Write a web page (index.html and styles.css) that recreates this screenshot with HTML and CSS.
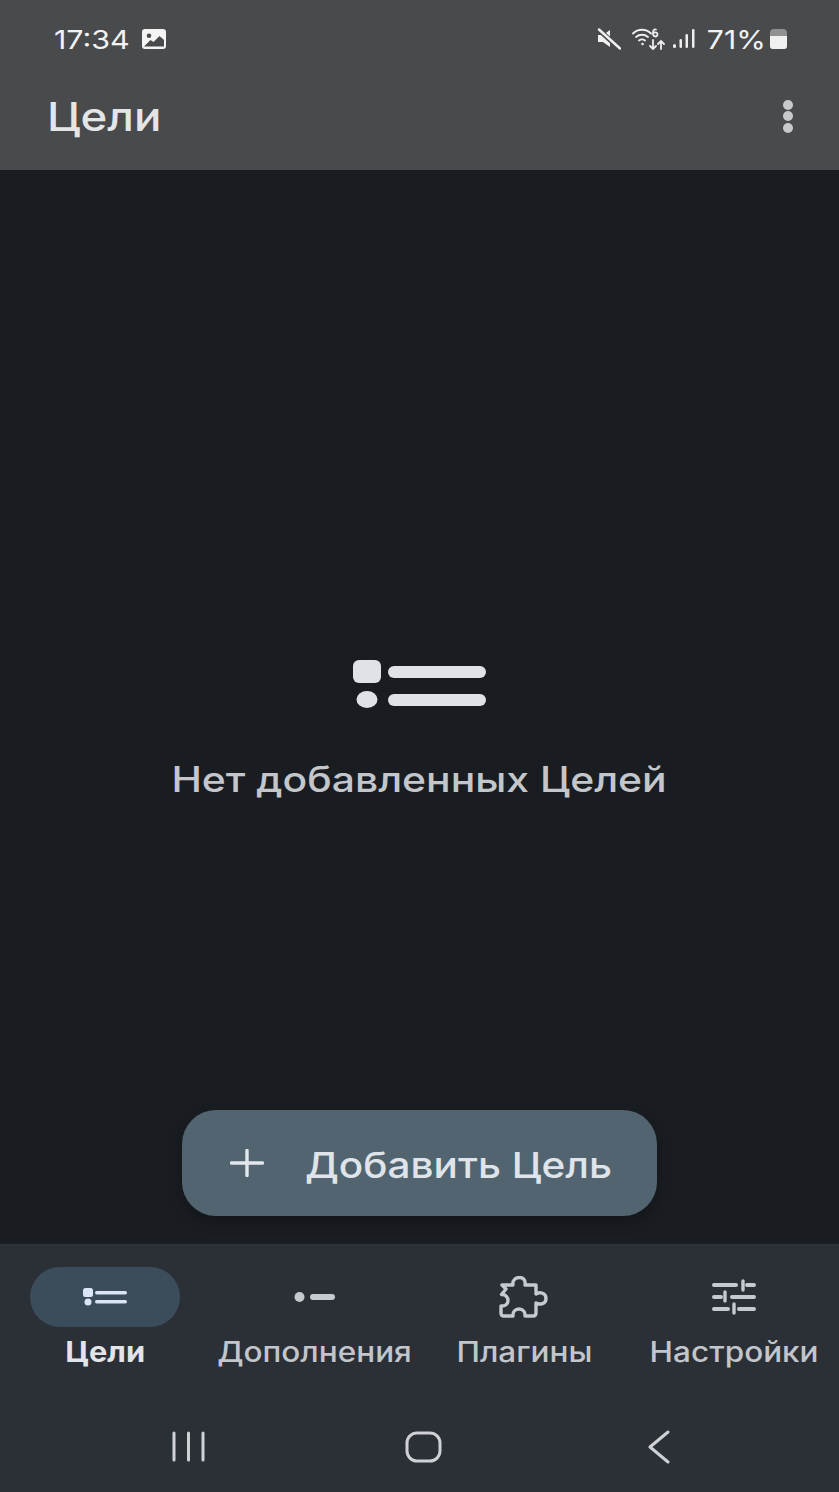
FILE: index.html
```html
<!DOCTYPE html>
<html>
<head>
	<meta charset="utf-8">
	<meta name="viewport" content="width=device-width, initial-scale=1">
	<title>Цели</title>
	<link rel="stylesheet" href="styles.css">
</head>
<body>
	<div class="app">
		<header class="appbar">
			<div class="status">
				<span class="time">17:34</span>
				<svg class="st-pic" width="24" height="20" viewBox="0 0 24 20">
					<path fill="#f4f4f5" fill-rule="evenodd" d="M3 0h18a3 3 0 0 1 3 3v14a3 3 0 0 1-3 3H3a3 3 0 0 1-3-3V3a3 3 0 0 1 3-3zM7 4.500a2.300 2.300 0 1 0 0 4.600a2.300 2.300 0 0 0 0-4.600zM2 17.500h20v-6.500l-4.500-4-6 6-3-2z"/>
				</svg>
				<div class="status-right">
					<svg width="24" height="22" viewBox="0 0 24 22">
						<path fill="#f2f2f3" d="M1 7h5l7-5v17l-7-5H1z"/>
						<path stroke="#484a4c" stroke-width="5" d="M1 1l22 20"/>
						<path stroke="#f2f2f3" stroke-width="2.400" stroke-linecap="round" d="M2 1.500l21 19"/>
					</svg>
					<svg class="st-wifi" width="34" height="24" viewBox="0 0 34 24" fill="none" stroke="#eeeeef" stroke-width="1.800" stroke-linecap="round">
						<path d="M1 6.500c5-5 13-5 18 0M4 10c3.500-3 8.500-3 12 0M7 13.500c2-1.500 4-1.500 6 0"/>
						<circle cx="10.500" cy="17" r="1.300" fill="#eeeeef" stroke="none"/>
						<path d="M24 2.500c-2-.5-3 1-3 3.500s.8 3.500 2.300 3.500 2.200-1 2.200-2.200-.9-2-2.200-2-2.300.8-2.300 1.500"/>
						<path d="M21 13v9M18 19l3 3 3-3M29 22v-8M26 17l3-3 3 3"/>
					</svg>
					<svg class="st-signal" width="22" height="20" viewBox="0 0 22 20" fill="#eeeeef">
						<rect x="0" y="15" width="3" height="4" rx="1.500"/>
						<rect x="6.500" y="10" width="2.500" height="9" rx="1.200"/>
						<rect x="12.500" y="5" width="2.500" height="14" rx="1.200"/>
						<rect x="19" y="0" width="2.500" height="19" rx="1.200"/>
					</svg>
					<span class="pct">71%</span>
					<div class="battery"><div class="battery-fill"></div></div>
				</div>
			</div>
			<div class="titlebar">
				<h1 class="title">Цели</h1>
				<div class="more"><i></i><i></i><i></i></div>
			</div>
		</header>

		<main class="content">
			<div class="empty">
				<svg width="134" height="50" viewBox="0 0 134 50" fill="#dfe2e7">
					<rect x="0" y="0" width="28" height="23" rx="6"/>
					<ellipse cx="14" cy="39.500" rx="10.500" ry="8.500"/>
					<rect x="35" y="6" width="98" height="12" rx="6"/>
					<rect x="35" y="34" width="98" height="12" rx="6"/>
				</svg>
				<p class="empty-text">Нет добавленных Целей</p>
			</div>
			<button class="fab">
				<svg width="34" height="28" viewBox="0 0 34 28" stroke="#e3e6ec" stroke-width="3.400" stroke-linecap="round">
					<path d="M1.500 14h31M17 1.500v25"/>
				</svg>
				<span class="fab-label">Добавить Цель</span>
			</button>
		</main>

		<nav class="navbar">
			<div class="nav-item active">
				<div class="pill">
					<svg width="44" height="18" viewBox="0 0 44 18" fill="#dbe6f4">
						<rect x="0" y="0" width="10" height="9" rx="2.500"/>
						<circle cx="5" cy="14" r="3.500"/>
						<rect x="12" y="3" width="32" height="3.500" rx="1.700"/>
						<rect x="12" y="12" width="32" height="3.500" rx="1.700"/>
					</svg>
				</div>
				<span class="nav-label">Цели</span>
			</div>
			<div class="nav-item">
				<div class="pill">
					<svg width="42" height="12" viewBox="0 0 42 12" fill="#c6c9ce">
						<circle cx="5.500" cy="6" r="5"/>
						<rect x="16" y="3" width="25" height="6" rx="3"/>
					</svg>
				</div>
				<span class="nav-label">Дополнения</span>
			</div>
			<div class="nav-item">
				<div class="pill">
					<svg width="50" height="42" viewBox="0 0 50 42" fill="none" stroke="#c6c9ce" stroke-width="3.400" stroke-linejoin="round">
						<path d="M3 9h11c-1-5 3-7.500 6.500-7.500S27 4 26 9h11v9c4-2.500 10-1 10 4.500S41 29 37 27v10c0 2-1 3-3 3H26c.5-4-2-7-6-7s-6.500 3-6 7H5c-2 0-3-1-3-3v-7c4 .5 7-2 7-5.500S6 18 2.500 18.500L7 13z"/>
					</svg>
				</div>
				<span class="nav-label">Плагины</span>
			</div>
			<div class="nav-item">
				<div class="pill">
					<svg width="44" height="36" viewBox="0 0 44 36" stroke="#c6c9ce" stroke-width="4" stroke-linecap="round" fill="none">
						<path d="M2 6h22M35 6h7M2 18h7M20 18h22M2 30h14M27 30h15"/>
						<path stroke-width="3.400" d="M31 2v9M13 13v9M22 25v9"/>
					</svg>
				</div>
				<span class="nav-label">Настройки</span>
			</div>
		</nav>

		<div class="sysbar">
			<svg width="36" height="32" viewBox="0 0 36 32" stroke="#cfd1d5" stroke-width="3" stroke-linecap="round">
				<path d="M3 2v27M17.500 2v27M32 2v27"/>
			</svg>
			<svg class="home" width="38" height="32" viewBox="0 0 38 32" fill="none" stroke="#cfd1d5" stroke-width="3">
				<rect x="2" y="2" width="33" height="28" rx="10"/>
			</svg>
			<svg width="24" height="34" viewBox="0 0 24 34" fill="none" stroke="#cfd1d5" stroke-width="3" stroke-linecap="round" stroke-linejoin="round">
				<path d="M21 2L3 17l18 15"/>
			</svg>
		</div>
	</div>
</body>
</html>
```

FILE: styles.css
```css
body {
	margin: 0;
	background: #191d21;
	font-family: "Inter", "Liberation Sans", sans-serif;
}

.app {
	display: flex;
	flex-direction: column;
	height: 1492px;
	overflow: hidden;
}

/* top bar */
.appbar {
	height: 170px;
	background: #484a4c;
	box-sizing: border-box;
	padding-top: 24px;
}

.status {
	display: flex;
	align-items: center;
	height: 30px;
	padding: 0 52px 0 54px;
	color: #f2f2f3;
}

/* the shot is stretched sideways, so the text is too */
.time {
	font-size: 26px;
	transform: scaleX(1.17);
	transform-origin: left center;
}

.st-pic {
	margin-left: 23px;
}

.status-right {
	display: flex;
	align-items: center;
	margin-left: auto;
}

.st-wifi {
	margin-left: 11px;
}

.st-signal {
	margin-left: 7px;
}

.pct {
	font-size: 26px;
	margin-left: 20px;
	transform: scaleX(1.16);
	transform-origin: right center;
}

.battery {
	width: 17px;
	height: 20px;
	margin-left: 4px;
	background: #909193;
	border-radius: 4px 4px 3px 3px;
	display: flex;
	align-items: flex-end;
}

.battery-fill {
	width: 100%;
	height: 13px;
	background: #f0f0f1;
	border-radius: 0 0 3px 3px;
}

.titlebar {
	display: flex;
	align-items: center;
	justify-content: space-between;
	height: 62px;
	margin-top: 31px;
	padding: 0 46px 0 47px;
}

.title {
	margin: 0;
	font-size: 40px;
	font-weight: 500;
	color: #e4e5e7;
	transform: scaleX(1.14);
	transform-origin: left center;
}

.more {
	display: flex;
	flex-direction: column;
	gap: 1.500px;
}

.more i {
	width: 10px;
	height: 10px;
	border-radius: 50%;
	background: #c8c9cc;
}

/* main area */
.content {
	flex: 1;
	display: flex;
	flex-direction: column;
	align-items: center;
	padding: 490px 0 28px;
	box-sizing: border-box;
}

.empty {
	display: flex;
	flex-direction: column;
	align-items: center;
}

.empty-text {
	margin: 48px 0 0;
	font-size: 35px;
	font-weight: 500;
	color: #c3c6cb;
	white-space: nowrap;
	transform: scaleX(1.168);
}

.fab {
	margin-top: auto;
	width: 475px;
	height: 106px;
	display: flex;
	align-items: center;
	gap: 41px;
	padding: 0 0 0 48px;
	border: 0;
	border-radius: 34px;
	background: #52646f;
	box-shadow: 0 6px 14px rgba(0, 0, 0, 0.25);
	font-family: inherit;
	font-size: 36px;
	font-weight: 500;
	color: #dfe4ea;
	white-space: nowrap;
}

.fab-label {
	margin-top: 4px;
	transform: scaleX(1.125);
	transform-origin: left center;
}

/* bottom nav */
.navbar {
	display: grid;
	grid-template-columns: repeat(4, 1fr);
	height: 158px;
	box-sizing: border-box;
	padding-top: 22px;
	background: #2b2f36;
	border-top: 1px solid #30353c;
}

.nav-item {
	display: flex;
	flex-direction: column;
	align-items: center;
}

.pill {
	width: 150px;
	height: 60px;
	border-radius: 30px;
	display: flex;
	align-items: center;
	justify-content: center;
}

.active .pill {
	background: #3b4d5a;
}

.nav-label {
	margin-top: 8px;
	font-size: 28px;
	font-weight: 500;
	color: #c2c5ca;
	white-space: nowrap;
	transform: scaleX(1.125);
}

.active .nav-label {
	font-weight: 700;
	color: #e2e4e7;
	transform: scaleX(1.1);
}

.sysbar {
	display: flex;
	align-items: center;
	justify-content: space-between;
	height: 90px;
	padding: 0 168px 0 171px;
	box-sizing: border-box;
	background: #2b2f36;
}

.home {
	margin-right: 7px;
}
```
